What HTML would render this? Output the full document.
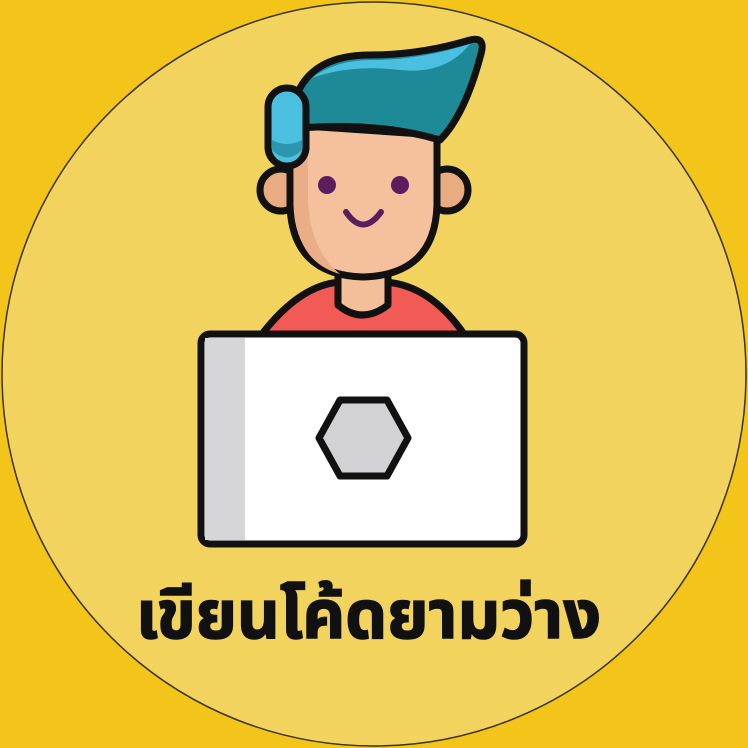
<!DOCTYPE html>
<html><head><meta charset="utf-8"><style>
html,body{margin:0;padding:0;background:#F3C51A;}
svg{display:block}
</style></head><body>
<svg width="748" height="748" viewBox="0 0 748 748">
<rect width="748" height="748" fill="#F3C51A"/>
<circle cx="374" cy="374" r="372" fill="#F2D35E" stroke="#3a3320" stroke-width="1.5"/>
<path d="M262 334 Q300 285 340 282 L385 282 Q430 285 464 334 Z" fill="#F25A55" stroke="#111" stroke-width="7" stroke-linejoin="round"/>
<path d="M338 262 L338 305 Q362 325 388 305 L388 262 Z" fill="#F2BF98" stroke="#111" stroke-width="7" stroke-linejoin="round"/>
<circle cx="281" cy="190" r="21" fill="#E9AB80" stroke="#111" stroke-width="7"/>
<circle cx="447" cy="190" r="21" fill="#E9AB80" stroke="#111" stroke-width="7"/>
<path d="M290 125 L290 205 Q292 275 363 277 Q435 275 437 205 L437 135 Z" fill="#F4C19C" stroke="#111" stroke-width="7" stroke-linejoin="round"/>
<path d="M294 130 L294 205 Q296 262 340 274 Q310 250 308 200 L308 130 Z" fill="#EAAD86"/>
<path d="M298 92 Q315 55 370 55 Q420 55 470 40 Q486 36 481 54 Q465 115 440 140 Q380 122 300 128 Z" fill="#1E8A98" stroke="#111" stroke-width="7" stroke-linejoin="round"/>
<path d="M312 78 Q335 60 372 60 Q420 60 470 44 Q445 75 400 70 Q350 64 312 78 Z" fill="#4BBFE0"/>
<rect x="268" y="88" width="38" height="78" rx="19" fill="#4BBFE0" stroke="#111" stroke-width="7"/>
<path d="M272 140 Q287 148 302 140 L302 150 Q287 165 272 150 Z" fill="#2A97AE"/>
<circle cx="327" cy="185" r="9" fill="#5A1E5E"/>
<circle cx="400" cy="185" r="9" fill="#5A1E5E"/>
<path d="M346 212 Q363 237 381 212" fill="none" stroke="#5A1E5E" stroke-width="6" stroke-linecap="round"/>
<rect x="201" y="334" width="323" height="210" rx="9" fill="#FFFFFF" stroke="#111" stroke-width="7"/>
<rect x="205" y="338" width="40" height="202" fill="#D6D6D9"/>
<polygon points="340,400 387,400 408,438 387,476 340,476 319,438" fill="#D2D2D4" stroke="#111" stroke-width="7" stroke-linejoin="round"/>
<text x="136" y="638" textLength="465" lengthAdjust="spacingAndGlyphs" font-family="'Liberation Sans','Noto Sans Thai','Loma','Garuda',sans-serif" font-weight="bold" font-size="68" fill="#111" stroke="#111" stroke-width="1.5">เขียนโค้ดยามว่าง</text>
</svg>
</body></html>
